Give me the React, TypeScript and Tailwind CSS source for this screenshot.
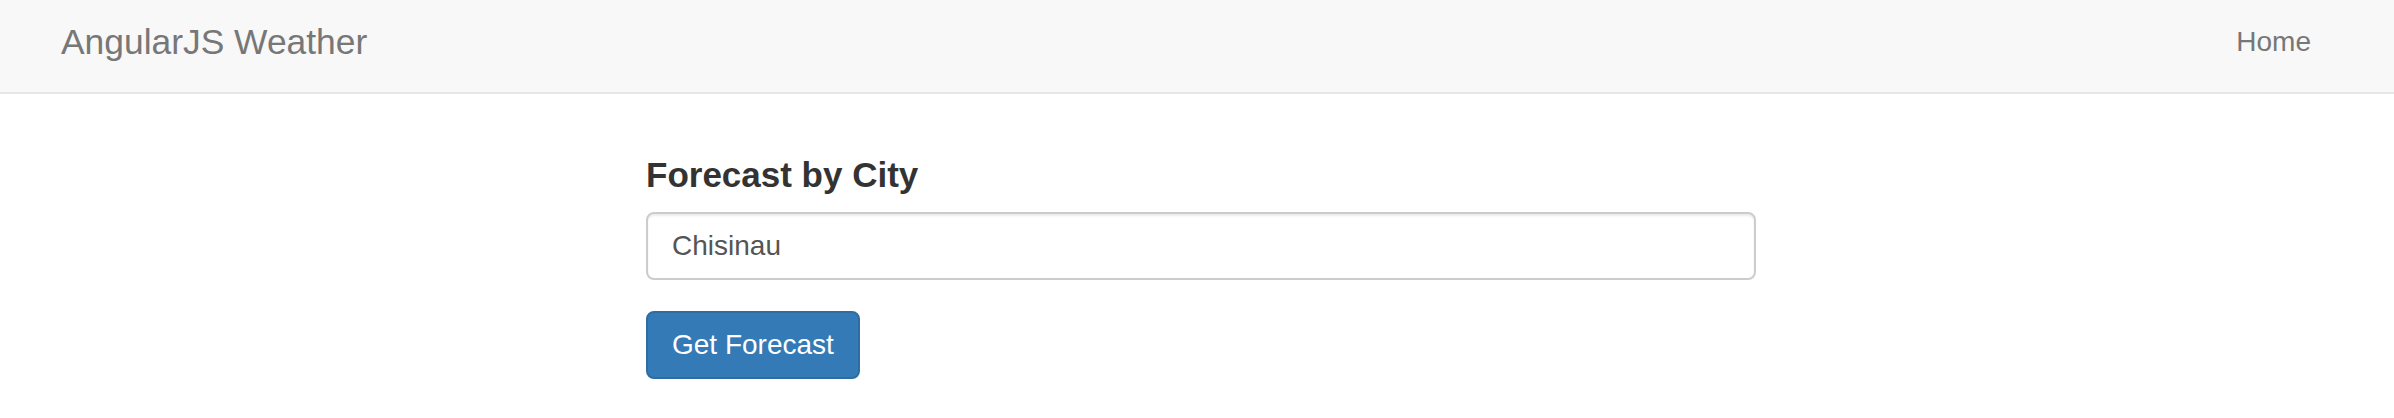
export default function App() {
  const font = { fontFamily: '"Liberation Sans", Arial, Helvetica, sans-serif' };
  return (
    <div className="min-h-[418px] bg-white" style={font}>
      <nav className="h-[94px] bg-[#f8f8f8] border-b-2 border-[#e7e7e7] flex items-start justify-between pl-[61px] pr-[83px]">
        <a className="pt-[21.5px] text-[35.4px] leading-[40px] text-[#777777]">AngularJS Weather</a>
        <a className="pt-[26px] text-[28px] leading-[32px] text-[#777777]">Home</a>
      </nav>
      <div className="flex justify-center pl-[8px]">
        <div className="w-[1110px] flex flex-col items-start">
          <h4 className="mt-[61px] text-[35px] leading-[40px] font-bold text-[#333333]">Forecast by City</h4>
          <input
            className="mt-[17px] w-full h-[68px] border-2 border-[#cccccc] rounded-[8px] px-[24px] text-[28px] text-[#555555] bg-white shadow-[inset_0_2px_2px_rgba(0,0,0,0.075)] outline-none"
            style={font}
            defaultValue="Chisinau"
          />
          <button
            className="mt-[31px] h-[68px] px-[24px] border-2 border-[#2e6da4] rounded-[8px] bg-[#337ab7] text-white text-[28px] leading-[32px]"
            style={font}
          >
            Get Forecast
          </button>
        </div>
      </div>
    </div>
  );
}
